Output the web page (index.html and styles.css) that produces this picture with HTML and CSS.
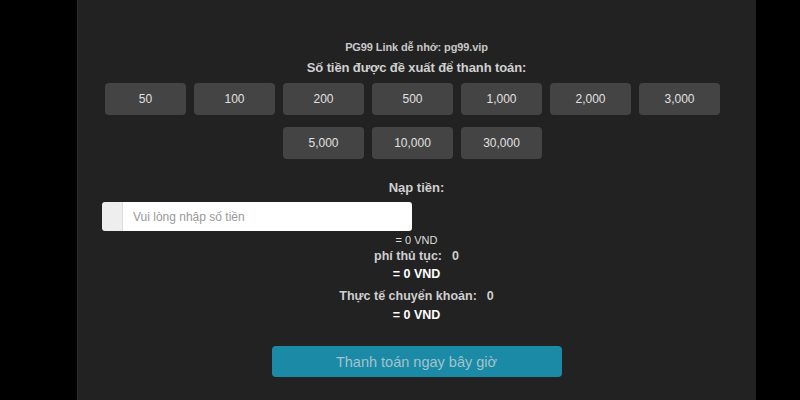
FILE: index.html
```html
<!DOCTYPE html>
<html lang="vi">
<head>
<meta charset="utf-8">
<title>PG99</title>
<link rel="stylesheet" href="styles.css">
</head>
<body>
<div class="panel">
  <div class="link">PG99 Link dễ nhớ: pg99.vip</div>
  <div class="title">Số tiền được đề xuất để thanh toán:</div>
  <div class="amounts">
    <button class="amt">50</button>
    <button class="amt">100</button>
    <button class="amt">200</button>
    <button class="amt">500</button>
    <button class="amt">1,000</button>
    <button class="amt">2,000</button>
    <button class="amt">3,000</button>
    <button class="amt">5,000</button>
    <button class="amt">10,000</button>
    <button class="amt">30,000</button>
  </div>
  <div class="label">Nạp tiền:</div>
  <div class="input-group">
    <span class="addon"></span>
    <input class="field" type="text" placeholder="Vui lòng nhập số tiền">
  </div>
  <div class="conv">= 0 VND</div>
  <div class="row">phí thủ tục:<span class="val">0</span></div>
  <div class="total">= 0 VND</div>
  <div class="row row-gap">Thực tế chuyển khoản:<span class="val">0</span></div>
  <div class="total total2">= 0 VND</div>
  <button class="pay">Thanh toán ngay bây giờ</button>
</div>
</body>
</html>
```
FILE: styles.css
```css
html, body {
  margin: 0;
  padding: 0;
  background: #000;
  font-family: "Liberation Sans", Arial, sans-serif;
}
.panel {
  width: 679px;
  height: 400px;
  margin-left: 77px;
  background: #222;
  box-shadow: inset 1px 0 0 #2b2b2b;
  text-align: center;
  overflow: hidden;
}
.link {
  padding-top: 40px;
  font-size: 11px;
  font-weight: bold;
  line-height: 14px;
  color: #c8c8c8;
  letter-spacing: -0.1px;
}
.title {
  margin-top: 6px;
  font-size: 13px;
  font-weight: bold;
  line-height: 16px;
  color: #d0d0d0;
  letter-spacing: -0.1px;
}
.amounts {
  margin-top: 7px;
  display: flex;
  flex-wrap: wrap;
  justify-content: center;
  row-gap: 12px;
}
.amt {
  width: 81px;
  height: 32px;
  margin: 0 8px 0 0;
  padding: 0;
  border: none;
  border-radius: 4px;
  background: #444;
  color: #e0e0e0;
  font-family: inherit;
  font-size: 12px;
}
.label {
  margin-top: 21px;
  font-size: 13px;
  font-weight: bold;
  line-height: 16px;
  color: #d0d0d0;
}
.input-group {
  display: flex;
  width: 310px;
  height: 29px;
  margin: 6px 0 0 25px;
  border-radius: 3px;
  overflow: hidden;
}
.addon {
  width: 20px;
  background: #eee;
  border-right: 1px solid #ddd;
}
.field {
  flex: 1;
  border: none;
  padding: 0 0 0 10px;
  margin: 0;
  background: #fff;
  font-family: inherit;
  font-size: 12px;
  outline: none;
}
.field::placeholder {
  color: #999;
}
.conv {
  margin-top: 3px;
  font-size: 11px;
  line-height: 13px;
  color: #ddd;
}
.row {
  margin-top: 1px;
  font-size: 12.5px;
  font-weight: bold;
  line-height: 16px;
  color: #cfcfcf;
}
.row-gap {
  margin-top: 6px;
}
.val {
  margin-left: 10px;
}
.total {
  margin-top: 2px;
  font-size: 12.5px;
  font-weight: bold;
  line-height: 16px;
  color: #fff;
}
.total2 {
  margin-top: 3px;
}
.pay {
  display: block;
  width: 290px;
  height: 31px;
  margin: 23px auto 0;
  padding: 0;
  border: none;
  border-radius: 4px;
  background: #1a8aa7;
  color: #a3c3cb;
  font-family: inherit;
  font-size: 14.5px;
}
```
